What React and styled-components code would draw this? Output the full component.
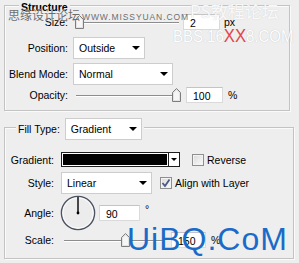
import React from "react";
import styled, { createGlobalStyle } from "styled-components";

const GlobalStyle = createGlobalStyle`
  html, body {
    margin: 0;
    padding: 0;
    background: #eeeeee;
  }
  body {
    font-family: "Liberation Sans", Arial, sans-serif;
    font-size: 10.5px;
    color: #000;
  }
`;

const Panel = styled.div`
  position: relative;
  width: 299px;
  height: 263px;
  overflow: hidden;
  background: #eeeeee;
  padding-top: 5px;
  box-sizing: border-box;
`;

const Group = styled.div`
  position: relative;
  box-sizing: border-box;
  margin: ${(p) => p.$top || 0}px 0 0 4px;
  width: ${(p) => p.$width}px;
  height: ${(p) => p.$height}px;
  padding-top: ${(p) => p.$pad}px;
  border: 1px solid #c3c3c3;
  box-shadow: inset 1px 1px 0 #fafafa, 1px 1px 0 #fafafa;
`;

const Legend = styled.div`
  position: absolute;
  left: ${(p) => p.$left}px;
  top: ${(p) => p.$top}px;
  display: flex;
  align-items: center;
  gap: 5px;
  padding: 0 2px;
  background: #eeeeee;
  font-weight: ${(p) => (p.$bold ? 700 : 400)};
`;

const Row = styled.div`
  display: flex;
  align-items: center;
  height: ${(p) => p.$h}px;
  margin-top: ${(p) => p.$mt || 0}px;
`;

const Label = styled.div`
  width: ${(p) => p.$w}px;
  margin-right: ${(p) => p.$gap}px;
  text-align: right;
  white-space: nowrap;
`;

const SelectBox = styled.div`
  box-sizing: border-box;
  display: flex;
  align-items: center;
  justify-content: space-between;
  width: ${(p) => p.$w}px;
  height: 22px;
  padding: 0 4px 0 5px;
  background: #fff;
  border: 1px solid #cdcdcd;
  font-weight: 400;
`;

const Arrow = styled.span`
  width: 0;
  height: 0;
  border-left: 4px solid transparent;
  border-right: 4px solid transparent;
  border-top: 4px solid #000;
`;

const Field = styled.div`
  box-sizing: border-box;
  width: ${(p) => p.$w}px;
  height: 16px;
  margin-left: ${(p) => p.$ml || 0}px;
  padding: 2px 0 0 6px;
  background: #fff;
  border: 1px solid #dadada;
  border-top-color: #c4c4c4;
`;

const Unit = styled.span`
  margin-left: ${(p) => p.$ml || 4}px;
  margin-bottom: ${(p) => p.$raise || 0}px;
`;

const SliderBox = styled.div`
  position: relative;
  width: ${(p) => p.$w}px;
  height: 16px;
`;

const Track = styled.div`
  position: absolute;
  left: 3px;
  right: 4px;
  top: 8px;
  height: 1px;
  background: #8d8d8d;
  box-shadow: 0 1px 0 #fff;
`;

const ThumbSvg = styled.svg`
  position: absolute;
  top: 1px;
`;

const Swatch = styled.div`
  display: flex;
  width: 119px;
  height: 15px;
  box-sizing: border-box;
  border: 1px solid #1d1d1d;
  background: #fff;
`;

const SwatchFill = styled.div`
  flex: 1;
  background: #000;
  box-shadow: inset 0 0 0 1px #fff, inset 0 0 0 2px #000;
`;

const SwatchArrow = styled.div`
  width: 10px;
  display: flex;
  align-items: center;
  justify-content: center;
  border-left: 1px solid #1d1d1d;
  & > span {
    border-left-width: 3px;
    border-right-width: 3px;
    border-top-width: 3px;
  }
`;

const Check = styled.label`
  display: flex;
  align-items: center;
  margin-left: ${(p) => p.$ml}px;
  gap: 3px;
`;

const Box = styled.span`
  box-sizing: border-box;
  width: 12px;
  height: 12px;
  border: 1px solid #8f8f8f;
  background: linear-gradient(135deg, #d9d9d9, #fbfbfb);
  box-shadow: inset 0 0 0 1px #f3f3f3;
  display: flex;
  align-items: center;
  justify-content: center;
`;

const Watermark = styled.div`
  position: absolute;
  left: ${(p) => p.$x}px;
  top: ${(p) => p.$y}px;
  white-space: nowrap;
  pointer-events: none;
  line-height: 1;
`;

const CnMark = styled(Watermark)`
  font-family: "Noto Sans CJK SC", sans-serif;
  font-size: 12px;
  color: #6c6c6c;
  text-shadow: 0 0 1px #fff;
`;

const UrlMark = styled(Watermark)`
  font-size: 8.5px;
  letter-spacing: 0.9px;
  color: #6f6f6f;
`;

const ForumMark = styled(Watermark)`
  font-family: "Noto Sans CJK SC", sans-serif;
  font-size: 17px;
  color: rgba(255, 255, 255, 0.9);
  text-shadow: 0 0 1px #c9c9c9;
`;

const BbsMark = styled(Watermark)`
  font-size: 17px;
  color: #fff;
  text-shadow: 0 0 1px #b5b5b5;
  transform: scaleX(0.88);
  transform-origin: left top;
  & > b {
    font-weight: 400;
    font-size: 19px;
    color: #e0464b;
    text-shadow: none;
  }
`;

const BlueMark = styled(Watermark)`
  font-size: 32px;
  letter-spacing: 1px;
  color: #1a6bc8;
`;

const Thumb = ({ pct }) => (
  <ThumbSvg width="9" height="14" viewBox="0 0 9 14" style={{ left: 2 + pct * 97 }}>
    <path d="M0.5 4.5 L4.5 0.5 L8.5 4.5 L8.5 13.5 L0.5 13.5 Z" fill="#e3e3e3" stroke="#7d7d7d" />
    <path d="M2 5 L4.5 2.5 L7 5 L7 12 L2 12 Z" fill="#f6f6f6" />
  </ThumbSvg>
);

const Slider = ({ w, pct }) => (
  <SliderBox $w={w}>
    <Track />
    <Thumb pct={pct} />
  </SliderBox>
);

const Select = ({ w, children }) => (
  <SelectBox $w={w}>
    {children}
    <Arrow />
  </SelectBox>
);

const Dial = () => (
  <svg width="36" height="36" viewBox="0 0 36 36">
    <circle cx="18" cy="18" r="16.6" fill="#ececec" stroke="#4b5262" strokeWidth="1.4" />
    <circle cx="18" cy="18" r="15.2" fill="none" stroke="#fbfbfb" strokeWidth="1" />
    <line x1="18" y1="18" x2="18" y2="2" stroke="#000" strokeWidth="1.4" />
    <circle cx="18" cy="18" r="1.4" fill="#000" />
  </svg>
);

const CheckMark = () => (
  <svg width="10" height="10" viewBox="0 0 10 10">
    <path d="M1.5 5 L4 8 L8.5 1.5" fill="none" stroke="#4a5a86" strokeWidth="1.8" />
  </svg>
);

export default function App() {
  return (
    <>
      <GlobalStyle />
      <Panel>
        <Group $width={286} $height={106} $pad={6}>
          <Legend $left={14} $top={-5} $bold>
            Structure
          </Legend>
          <Row $h={20}>
            <Label $w={63} $gap={5}>Size:</Label>
            <Slider w={110} pct={0} />
            <Field $w={37} $ml={0}>2</Field>
            <Unit>px</Unit>
          </Row>
          <Row $h={23} $mt={4}>
            <Label $w={63} $gap={5}>Position:</Label>
            <Select w={72}>Outside</Select>
          </Row>
          <Row $h={23} $mt={3}>
            <Label $w={63} $gap={5}>Blend Mode:</Label>
            <Select w={100}>Normal</Select>
          </Row>
          <Row $h={18} $mt={1}>
            <Label $w={63} $gap={5}>Opacity:</Label>
            <Slider w={110} pct={1} />
            <Field $w={37} $ml={3}>100</Field>
            <Unit $ml={5}>%</Unit>
          </Row>
        </Group>

        <Group $width={290} $height={132} $pad={0} $top={16}>
          <Legend $left={11} $top={-10}>
            Fill Type:
            <Select w={77}>Gradient</Select>
          </Legend>
          <Row $h={15} $mt={24}>
            <Label $w={49} $gap={7}>Gradient:</Label>
            <Swatch>
              <SwatchFill />
              <SwatchArrow>
                <Arrow />
              </SwatchArrow>
            </Swatch>
            <Check $ml={12}>
              <Box />
              Reverse
            </Check>
          </Row>
          <Row $h={22} $mt={5}>
            <Label $w={49} $gap={7}>Style:</Label>
            <Select w={91}>Linear</Select>
            <Check $ml={8}>
              <Box>
                <CheckMark />
              </Box>
              Align with Layer
            </Check>
          </Row>
          <Row $h={34} $mt={2}>
            <Label $w={49} $gap={6}>Angle:</Label>
            <Dial />
            <Field $w={41} $ml={3}>90</Field>
            <Unit $ml={5} $raise={8}>°</Unit>
          </Row>
          <Row $h={16} $mt={2}>
            <Label $w={49} $gap={7}>Scale:</Label>
            <Slider w={107} pct={0.6} />
            <Field $w={35} $ml={3}>150</Field>
            <Unit $ml={5}>%</Unit>
          </Row>
        </Group>

        <CnMark $x={8} $y={9}>思缘设计论坛</CnMark>
        <UrlMark $x={82} $y={13}>WWW.MISSYUAN.COM</UrlMark>
        <ForumMark $x={190} $y={2}>PS教程论坛</ForumMark>
        <BbsMark $x={173} $y={26}>
          BBS.16<b>XX</b>8.COM
        </BbsMark>
        <BlueMark $x={127} $y={223}>UiBQ.CoM</BlueMark>
      </Panel>
    </>
  );
}
